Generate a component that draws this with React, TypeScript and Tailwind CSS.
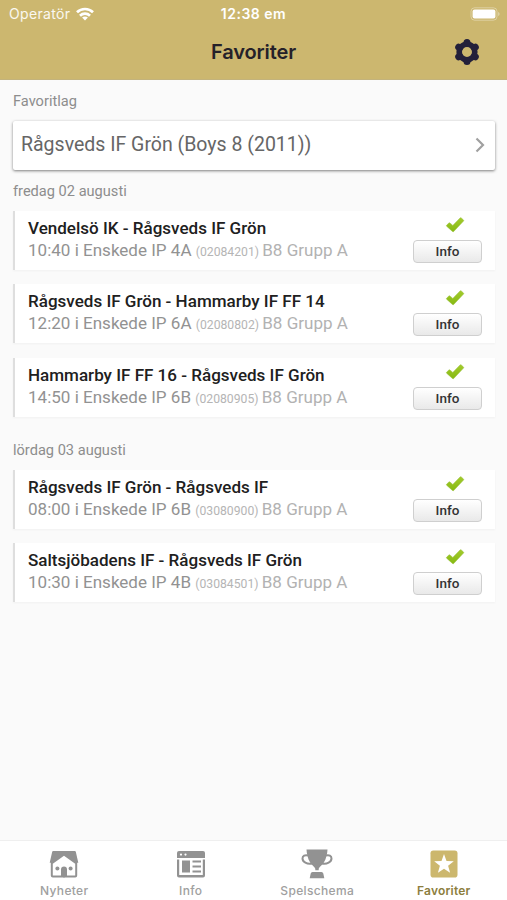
type Match = {
  teams: string;
  time: string;
  code: string;
};

type MatchDay = {
  label: string;
  matches: Match[];
};

const days: MatchDay[] = [
  {
    label: "fredag 02 augusti",
    matches: [
      { teams: "Vendelsö IK - Rågsveds IF Grön", time: "10:40 i Enskede IP 4A", code: "(02084201)" },
      { teams: "Rågsveds IF Grön - Hammarby IF FF 14", time: "12:20 i Enskede IP 6A", code: "(02080802)" },
      { teams: "Hammarby IF FF 16 - Rågsveds IF Grön", time: "14:50 i Enskede IP 6B", code: "(02080905)" },
    ],
  },
  {
    label: "lördag 03 augusti",
    matches: [
      { teams: "Rågsveds IF Grön - Rågsveds IF", time: "08:00 i Enskede IP 6B", code: "(03080900)" },
      { teams: "Saltsjöbadens IF - Rågsveds IF Grön", time: "10:30 i Enskede IP 4B", code: "(03084501)" },
    ],
  },
];

const WifiIcon = () => (
  <svg viewBox="0 0 18 14" className="h-[14px] w-[18px]" fill="none" stroke="white" strokeWidth="2.7">
    <path d="M1 5.2C5.4.9 12.6.9 17 5.2" />
    <path d="M4 8.7c2.8-2.7 7.2-2.7 10 0" />
    <path d="M9 13.6l-2.9-3c1.6-1.5 4.2-1.5 5.8 0z" fill="white" stroke="none" />
  </svg>
);

const BatteryIcon = () => (
  <svg viewBox="0 0 30 14" className="h-[14px] w-[30px]">
    <rect x="1" y=".8" width="26" height="12.4" rx="3.6" fill="none" stroke="white" strokeOpacity=".35" />
    <rect x="2.6" y="2.4" width="22.8" height="9.2" rx="2" fill="white" />
    <path d="M28.3 5v4c1.6-.7 1.6-3.3 0-4z" fill="white" fillOpacity=".5" />
  </svg>
);

const GearIcon = () => (
  <svg viewBox="0 0 26 26" className="h-[26px] w-[26px]" fill="none" stroke="#23203a">
    <path
      d="M13 3.6v1M13 22.4v-1M4.7 8.2l.9.5M21.3 17.800l-.9-.5M4.7 17.800l.9-.5M21.300 8.200l-.9.5"
      strokeWidth="7"
      strokeLinecap="round"
    />
    <circle cx="13" cy="13" r="7.8" strokeWidth="5.600" />
  </svg>
);

const CheckIcon = () => (
  <svg viewBox="0 0 20 16" className="h-[16px] w-[20px]">
    <defs>
      <linearGradient id="check" x1="0" y1="0" x2="0" y2="1">
        <stop offset="0" stopColor="#a3cb2c" />
        <stop offset="1" stopColor="#86b913" />
      </linearGradient>
    </defs>
    <path
      d="M1.6 8.2L3.9 6Q4.4 5.5 4.9 6L7.8 8.4 15.1.9Q15.7.4 16.2.9L18.5 3Q19 3.5 18.5 4.1L8.7 14.5Q8.1 15.1 7.5 14.5L1.6 9.2Q1.2 8.7 1.6 8.2Z"
      fill="url(#check)"
      stroke="#94bd35"
      strokeWidth=".5"
    />
  </svg>
);

const HomeIcon = () => (
  <svg viewBox="0 0 30 28" className="h-[28px] w-[30px]" fill="#929292">
    <path d="M4.2 1h21.6q.8 0 1 .8L29.3 12.8H28.2V25.4q0 2-2 2H3.8q-2 0-2-2V12.8H.7L3.2 1.8q.2-.8 1-.8z" />
    <path d="M15 5.7L3.8 13.7V25.4h8.2V19.6q0-3 3-3t3 3v5.8h8.2V13.7z" fill="white" />
    <rect x="13" y="17.8" width="4" height="9.6" rx="1.8" />
    <circle cx="8.4" cy="18.5" r="2" />
    <circle cx="21.6" cy="18.5" r="2" />
  </svg>
);

const NewsIcon = () => (
  <svg viewBox="0 0 30 28" className="h-[28px] w-[30px]" fill="#929292">
    <path d="M3 1h24q2 0 2 2v5H1V3q0-2 2-2z" />
    <circle cx="5" cy="4.6" r="1.1" fill="white" />
    <circle cx="9.5" cy="4.6" r="1.1" fill="white" />
    <path d="M1 9.5h2.2v15.6h23.6V9.5H29v16q0 2-2 2H3q-2 0-2-2z" />
    <rect x="6" y="10.5" width="8" height="12" />
    <path d="M16.5 10.5h8.5v2h-8.5zM16.5 15.5h8.5v2h-8.5zM16.5 20.5h8.5v2h-8.5z" />
  </svg>
);

const TrophyIcon = () => (
  <svg viewBox="0 0 32 30" className="h-[30px] w-[32px]" fill="#929292">
    <path d="M5.5.5h21c-.2 3.5-1 9-3.8 13.3-1.8 2.7-4.2 3.7-5 5.9v1.5h-3.4v-1.5c-.8-2.2-3.2-3.2-5-5.9C6.500 9.500 5.700 4 5.500.5z" />
    <path
      d="M7 6.500C4 5.500 1.500 7 1.500 9.500c0 3.500 4.500 6 9.500 5M25 6.500c3-1 5.500.5 5.500 3 0 3.500-4.500 6-9.500 5"
      fill="none"
      stroke="#929292"
      strokeWidth="2"
    />
    <path d="M11.500 23h9q1.500 0 1.800 1.500l1 4.700H8.700l1-4.700q.3-1.500 1.800-1.500z" />
  </svg>
);

const StarIcon = () => (
  <svg viewBox="0 0 28 28" className="h-[28px] w-[28px]">
    <rect x=".5" y=".5" width="27" height="27" rx="2.8" fill="#ccb76d" />
    <path d="M14 4l2.5 6.9 7.3.3-5.7 4.5 2 7-6.1-4-6.1 4 2-7-5.7-4.5 7.3-.3z" fill="white" />
  </svg>
);

const tabs = [
  { label: "Nyheter", icon: <HomeIcon />, active: false },
  { label: "Info", icon: <NewsIcon />, active: false },
  { label: "Spelschema", icon: <TrophyIcon />, active: false },
  { label: "Favoriter", icon: <StarIcon />, active: true },
];

const Header = () => (
  <header className="h-[80px] shrink-0 border-b border-[#c3b37c] bg-[#ccb76f] font-['Inter',sans-serif]">
    <div className="grid h-[27px] grid-cols-3 items-center px-[7px] text-white">
      <div className="flex items-center gap-[6px] pl-[2px]">
        <span className="text-[14px] tracking-[0.35px] text-white/90">Operatör</span>
        <WifiIcon />
      </div>
      <span className="text-center text-[14px] font-semibold tracking-[0.5px]">12:38 em</span>
      <div className="flex justify-end">
        <BatteryIcon />
      </div>
    </div>
    <div className="grid h-[50px] grid-cols-[1fr_auto_1fr] items-center px-[27px]">
      <span />
      <h1 className="text-[20px] font-semibold tracking-[-0.1px] text-[#252129]">Favoriter</h1>
      <button className="justify-self-end">
        <GearIcon />
      </button>
    </div>
  </header>
);

const MatchRow = ({ teams, time, code }: Match) => (
  <li className="flex h-[59px] justify-between border-l-2 border-[#dedede] bg-white px-[13px] shadow-[0_1px_2px_rgba(0,0,0,0.04)]">
    <div className="pt-[6px] whitespace-nowrap">
      <h3 className="text-[17.05px] leading-[22px] font-medium text-[#202020]">{teams}</h3>
      <p className="text-[17.05px] leading-[22px] text-[#929292]">
        {time} <span className="text-[12.2px] text-[#b5b5b5]">{code}</span>{" "}
        <span className="-ml-px text-[#b2b2b2]">B8 Grupp A</span>
      </p>
    </div>
    <div className="flex w-[69px] flex-col items-center pt-[6px]">
      <div className="pl-[15px]">
        <CheckIcon />
      </div>
      <button className="mt-[7px] h-[23px] w-[69px] rounded-[4px] border border-[#cfcfcf] bg-linear-to-b from-white to-[#e9e9e9] text-[13.5px] leading-[21px] font-medium text-[#333]">
        Info
      </button>
    </div>
  </li>
);

export default function App() {
  return (
    <div className="flex h-[900px] w-[507px] flex-col overflow-hidden bg-[#fafafa] font-['Roboto',sans-serif]">
      <Header />
      <main className="flex-1 pr-[12px] pl-[13px]">
        <h2 className="pt-[11px] text-[14.6px] leading-[20px] text-[#8d8d8d]">Favoritlag</h2>
        <button className="mt-[10px] flex h-[49px] w-full items-center justify-between rounded-[2px] bg-white pr-[10px] pb-[2px] pl-[8px] shadow-[0_1px_3px_rgba(0,0,0,0.5)]">
          <span className="text-[19.5px] text-[#666]">Rågsveds IF Grön (Boys 8 (2011))</span>
          <svg viewBox="0 0 10 16" className="h-[16px] w-[10px]" fill="none" stroke="#a0a0a0" strokeWidth="2.2">
            <path d="M1.5 1.5L8 8l-6.5 6.5" />
          </svg>
        </button>
        {days.map((day, i) => (
          <section key={day.label} className={i === 0 ? "pt-[11px]" : "pt-[23px]"}>
            <h2 className="text-[14.6px] leading-[20px] text-[#8d8d8d]">{day.label}</h2>
            <ul className="mt-[10px] flex flex-col gap-[14.4px]">
              {day.matches.map((match) => (
                <MatchRow key={match.code} {...match} />
              ))}
            </ul>
          </section>
        ))}
      </main>
      <nav className="grid h-[60px] shrink-0 grid-cols-4 border-t border-[#efefef] bg-white pl-px font-['Inter',sans-serif]">
        {tabs.map((tab) => (
          <a key={tab.label} className="flex flex-col items-center">
            <div className="mt-[7px] flex h-[31px] items-center">{tab.icon}</div>
            <span
              className={
                tab.active
                  ? "mt-[4px] text-[12px] leading-[16px] font-semibold tracking-[0.2px] text-[#8c7e3e]"
                  : "mt-[4px] text-[12px] leading-[16px] font-medium tracking-[0.35px] text-[#a0a0a0]"
              }
            >
              {tab.label}
            </span>
          </a>
        ))}
      </nav>
    </div>
  );
}
